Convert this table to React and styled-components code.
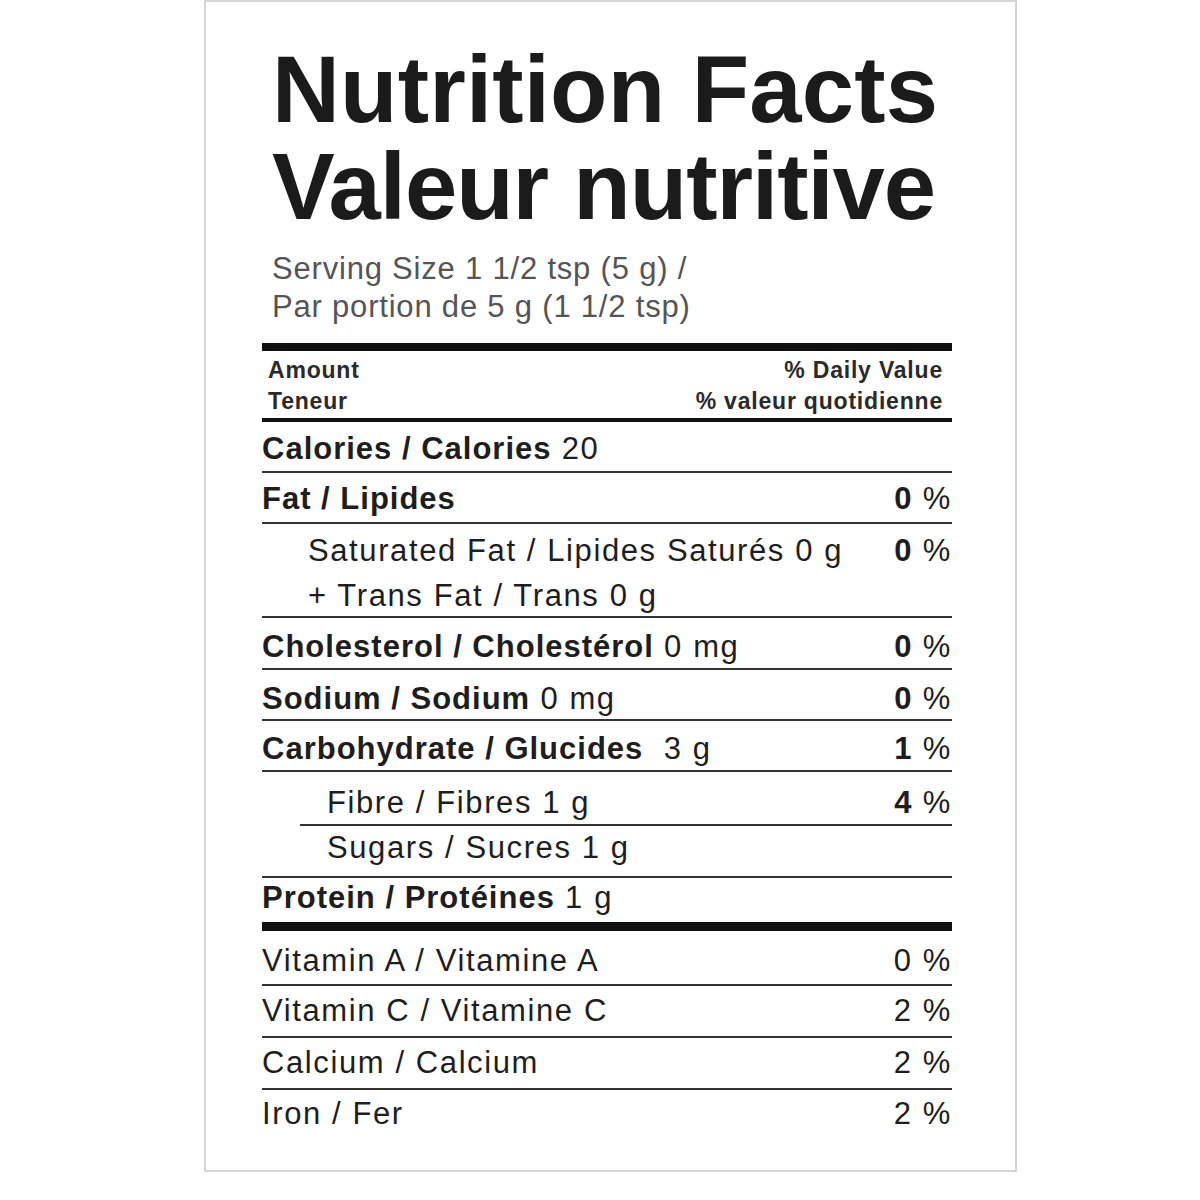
import React from 'react';
import styled, { createGlobalStyle } from 'styled-components';

const Global = createGlobalStyle`
  body {
    margin: 0;
    background: #fff;
    font-family: "Liberation Sans", Arial, Helvetica, sans-serif;
  }
`;

const Label = styled.div`
  box-sizing: border-box;
  margin-left: 204px;
  width: 813px;
  height: 1172px;
  border: 2px solid #d6d6d6;
  padding: 39px 63px 0 56px;
`;

const Title = styled.h1`
  margin: 0;
  padding-left: 10px;
  font-size: 94px;
  line-height: 97px;
  font-weight: 700;
  color: #1b1b1b;
`;

const TitleLine = styled.div`
  letter-spacing: ${p => p.$ls}px;
`;

const Serving = styled.p`
  margin: 15px 0 0;
  padding-left: 10px;
  font-size: 31px;
  line-height: 38px;
  letter-spacing: 0.8px;
  color: #555;
`;

const Rule = styled.div`
  height: ${p => p.$w}px;
  margin-top: ${p => p.$mt || 0}px;
  background: #111;
`;

const Header = styled.div`
  box-sizing: border-box;
  height: 71px;
  padding: 4px 9px 0 6px;
  display: flex;
  justify-content: space-between;
  border-bottom: 4px solid #111;
  font-size: 23px;
  line-height: 31px;
  font-weight: 700;
  letter-spacing: 0.8px;
  color: #2a2a2a;
`;

const HeaderCol = styled.div`
  text-align: ${p => (p.$right ? 'right' : 'left')};
`;

const Row = styled.div`
  box-sizing: border-box;
  height: ${p => p.$h || 51}px;
  padding-top: ${p => p.$pt ?? 8}px;
  margin-left: ${p => p.$ruleIndent || 0}px;
  padding-left: ${p => p.$indent || 0}px;
  border-bottom: ${p => (p.$noRule ? 'none' : '2px solid #333')};
  font-size: 31px;
  line-height: 38px;
  letter-spacing: 1.6px;
  color: #1e1e1e;
`;

const Line = styled.div`
  display: flex;
  justify-content: space-between;
  white-space: pre;
  & + & {
    margin-top: 7px;
  }
`;

const B = styled.span`
  font-weight: 700;
  letter-spacing: 1px;
`;

const Pct = ({ v, bold }) => (
  <span>{bold ? <B>{v}</B> : v} %</span>
);

const nutrients = [
  { name: 'Calories / Calories', amt: ' 20', h: 51 },
  { name: 'Fat / Lipides', pct: '0', h: 51, pt: 7 },
];

const mains = [
  { name: 'Cholesterol / Cholestérol', amt: ' 0 mg', pct: '0', h: 52, pt: 10 },
  { name: 'Sodium / Sodium', amt: ' 0 mg', pct: '0', h: 51, pt: 10 },
  { name: 'Carbohydrate / Glucides', amt: '  3 g', pct: '1', h: 51, pt: 9 },
];

const vitamins = [
  { name: 'Vitamin A / Vitamine A', pct: '0', h: 55, pt: 11 },
  { name: 'Vitamin C / Vitamine C', pct: '2', h: 52, pt: 6 },
  { name: 'Calcium / Calcium', pct: '2', h: 52, pt: 6 },
  { name: 'Iron / Fer', pct: '2', h: 60, pt: 5, last: true },
];

export default function App() {
  return (
    <>
      <Global />
      <Label>
        <Title>
          <TitleLine $ls={0.2}>Nutrition Facts</TitleLine>
          <TitleLine $ls={-1}>Valeur nutritive</TitleLine>
        </Title>
        <Serving>
          Serving Size 1 1/2 tsp (5 g) /
          <br />
          Par portion de 5 g (1 1/2 tsp)
        </Serving>
        <Rule $w={8} $mt={17} />
        <Header>
          <HeaderCol>
            Amount
            <br />
            Teneur
          </HeaderCol>
          <HeaderCol $right>
            % Daily Value
            <br />
            % valeur quotidienne
          </HeaderCol>
        </Header>

        {nutrients.map(n => (
          <Row key={n.name} $h={n.h} $pt={n.pt}>
            <Line>
              <span>
                <B>{n.name}</B>
                {n.amt}
              </span>
              {n.pct && <Pct v={n.pct} bold />}
            </Line>
          </Row>
        ))}

        <Row $h={94} $indent={46}>
          <Line>
            <span>Saturated Fat / Lipides Saturés 0 g</span>
            <Pct v="0" bold />
          </Line>
          <Line>
            <span>+ Trans Fat / Trans 0 g</span>
          </Line>
        </Row>

        {mains.map(n => (
          <Row key={n.name} $h={n.h} $pt={n.pt}>
            <Line>
              <span>
                <B>{n.name}</B>
                {n.amt}
              </span>
              <Pct v={n.pct} bold />
            </Line>
          </Row>
        ))}

        <Row $h={54} $pt={12} $ruleIndent={38} $indent={27}>
          <Line>
            <span>Fibre / Fibres 1 g</span>
            <Pct v="4" bold />
          </Line>
        </Row>
        <Row $h={52} $pt={3} $indent={65}>
          <Line>
            <span>Sugars / Sucres 1 g</span>
          </Line>
        </Row>
        <Row $h={44} $pt={1} $noRule>
          <Line>
            <span>
              <B>Protein / Protéines</B> 1 g
            </span>
          </Line>
        </Row>
        <Rule $w={9} />

        {vitamins.map(n => (
          <Row key={n.name} $h={n.h} $pt={n.pt} $noRule={n.last}>
            <Line>
              <span>{n.name}</span>
              <Pct v={n.pct} />
            </Line>
          </Row>
        ))}
      </Label>
    </>
  );
}
